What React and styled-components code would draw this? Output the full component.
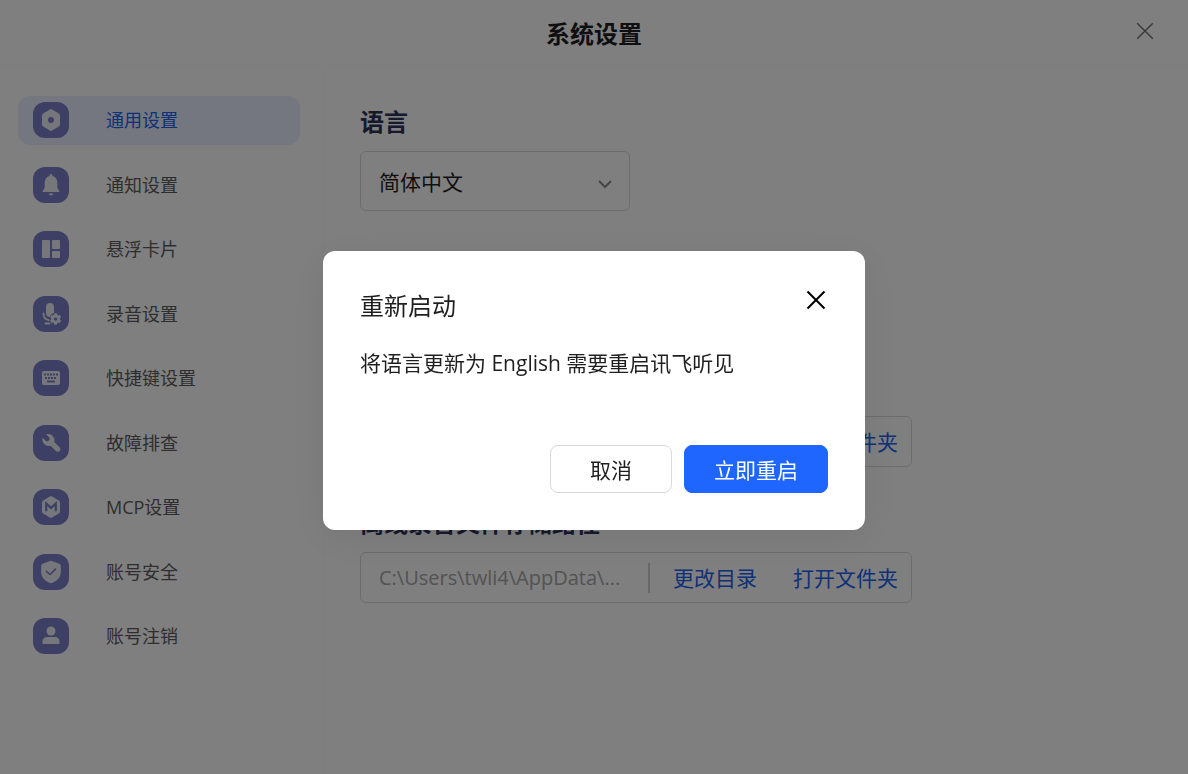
import React, { useState } from 'react'
import styled, { createGlobalStyle } from 'styled-components'

const GearIcon = () => (
    <svg width="36" height="36" viewBox="0 0 36 36" aria-hidden="true">
        <path fillRule="evenodd" fill="#eceef6" d="M16.8 7.6q1.2-.7 2.4 0l6.6 3.8q1.2.7 1.2 2.1v9q0 1.4-1.2 2.1l-6.6 3.8q-1.2.7-2.4 0l-6.6-3.8Q9 23.900 9 22.500v-9q0-1.400 1.200-2.100zM18 15a3 3 0 1 0 0 6a3 3 0 1 0 0-6z" />
    </svg>
)

const BellIcon = () => (
    <svg width="36" height="36" viewBox="0 0 36 36" aria-hidden="true" fill="#eceef6">
        <path d="M18 7c.8 0 1.300.5 1.300 1.300v.6c3 .7 5 3.300 5 6.500v5.200l1.900 3.300c.4.700 0 1.200-.7 1.200H10.500c-.7 0-1.100-.5-.7-1.200l1.900-3.300v-5.200c0-3.200 2-5.800 5-6.500v-.6c0-.8.5-1.300 1.300-1.300z" />
        <path d="M15.700 26.600h4.600c-.3 1.300-1.200 2-2.300 2s-2-.7-2.300-2z" />
    </svg>
)

const CardsIcon = () => (
    <svg width="36" height="36" viewBox="0 0 36 36" aria-hidden="true" fill="#eceef6">
        <rect x="9" y="9" width="8" height="18" rx="1" />
        <rect x="19" y="9" width="8" height="9" rx="1" />
        <rect x="19" y="20" width="8" height="7" rx="1" />
    </svg>
)

const MicIcon = () => (
    <svg width="36" height="36" viewBox="0 0 36 36" aria-hidden="true">
        <rect x="13" y="7" width="8" height="14" rx="4" fill="#eceef6" />
        <path d="M10.500 17.500c0 3.600 2.200 6.200 5.600 6.600M12.500 27.500h4" fill="none" stroke="#eceef6" strokeWidth="1.800" strokeLinecap="round" />
        <circle cx="22.600" cy="23" r="6.200" fill="#7a80c8" />
        <g fill="#eceef6">
            <circle cx="22.600" cy="23" r="4.400" />
            {[0, 60, 120].map((deg) => (
                <rect key={deg} x="21" y="17.300" width="3.200" height="11.400" rx="1" transform={`rotate(${deg} 22.600 23)`} />
            ))}
        </g>
        <circle cx="22.600" cy="23" r="1.700" fill="#7a80c8" />
    </svg>
)

const KeyboardIcon = () => (
    <svg width="36" height="36" viewBox="0 0 36 36" aria-hidden="true">
        <rect x="9" y="11" width="18" height="14" rx="2" fill="#eceef6" />
        <g stroke="#7a80c8" strokeWidth="2" fill="none">
            <path d="M11 14.500h14M12 18h12" strokeDasharray="2 1" />
            <path d="M14 21.500h8" />
        </g>
    </svg>
)

const WrenchIcon = () => (
    <svg width="36" height="36" viewBox="0 0 36 36" aria-hidden="true">
        <path fill="#eceef6" d="M13.200 9.300c3.400-1 7 .9 8 4.200.4 1.200.3 2.400 0 3.500l5.300 5.300c1.200 1.200 1.200 2.800.2 3.800s-2.700 1-3.800-.2l-5.300-5.200c-3.200.9-6.700-.8-7.900-4-.5-1.300-.5-2.700-.1-4l3.400 3.200c.7.600 1.600.6 2.200 0l1.200-1.200c.6-.6.5-1.400-.1-2z" />
    </svg>
)

const McpIcon = () => (
    <svg width="36" height="36" viewBox="0 0 36 36" aria-hidden="true">
        <path fill="#eceef6" d="M16.800 7.600q1.200-.7 2.400 0l6.600 3.800q1.200.7 1.200 2.100v9q0 1.400-1.200 2.100l-6.600 3.800q-1.200.7-2.400 0l-6.600-3.800Q9 23.900 9 22.500v-9q0-1.400 1.200-2.100z" />
        <path d="M13.200 22.300v-7.800l4.800 4.400 4.800-4.400v7.800" fill="none" stroke="#7a80c8" strokeWidth="2.200" />
    </svg>
)

const ShieldIcon = () => (
    <svg width="36" height="36" viewBox="0 0 36 36" aria-hidden="true">
        <path fill="#eceef6" d="M17.200 6.900q.8-.4 1.600 0l7.600 2.900q1.400.6 1.400 2v6.400c0 5-3.600 8.700-9 10.800q-.8.3-1.600 0c-5.400-2.100-9-5.800-9-10.800v-6.400q0-1.400 1.400-2z" />
        <path d="M13.500 17.300l3.500 3.200 5.500-5.400" fill="none" stroke="#7a80c8" strokeWidth="1.600" strokeLinecap="round" strokeLinejoin="round" />
    </svg>
)

const UserIcon = () => (
    <svg width="36" height="36" viewBox="0 0 36 36" aria-hidden="true" fill="#eceef6">
        <circle cx="18" cy="13" r="4.500" />
        <path d="M9.500 26v-2.500c0-3 2-4.500 4.500-4.500h8c2.500 0 4.500 1.500 4.500 4.500V26z" />
    </svg>
)

const CloseIcon = ({ size, weight }) => (
    <svg width={size} height={size} viewBox="0 0 24 24" aria-hidden="true" fill="none" stroke="currentColor" strokeWidth={weight}>
        <path d="M3.500 3.500l17 17M20.500 3.500l-17 17" />
    </svg>
)

const menu = [
    { id: 'general', label: '通用设置', Icon: GearIcon },
    { id: 'notice', label: '通知设置', Icon: BellIcon },
    { id: 'card', label: '悬浮卡片', Icon: CardsIcon },
    { id: 'record', label: '录音设置', Icon: MicIcon },
    { id: 'hotkey', label: '快捷键设置', Icon: KeyboardIcon },
    { id: 'trouble', label: '故障排查', Icon: WrenchIcon },
    { id: 'mcp', label: 'MCP设置', Icon: McpIcon },
    { id: 'safety', label: '账号安全', Icon: ShieldIcon },
    { id: 'logoff', label: '账号注销', Icon: UserIcon },
]

const PathField = ({ label }) => (
    <PathBox>
        <PathInput aria-label={label} readOnly value="C:\Users\twli4\AppData\..." />
        <PathActions>
            <TextButton type="button">更改目录</TextButton>
            <TextButton type="button">打开文件夹</TextButton>
        </PathActions>
    </PathBox>
)

const App = () => {
    const [current, setCurrent] = useState('general')
    const [isOpen, setIsOpen] = useState(true)
    return (
        <>
            <GlobalStyle />
            <Page>
                <Header>
                    <PageTitle>系统设置</PageTitle>
                    <PageClose type="button" aria-label="关闭设置">
                        <CloseIcon size={22} weight={1.5} />
                    </PageClose>
                </Header>
                <Body>
                    <Sidebar>
                        <Menu>
                            {menu.map(({ id, label, Icon }) => (
                                <li key={id}>
                                    <MenuButton type="button" $active={id === current} onClick={() => setCurrent(id)}>
                                        <IconTile><Icon /></IconTile>
                                        {label}
                                    </MenuButton>
                                </li>
                            ))}
                        </Menu>
                    </Sidebar>
                    <Content>
                        <Section>
                            <SectionTitle as="label" htmlFor="language">语言</SectionTitle>
                            <SelectBox>
                                <Select id="language" defaultValue="zh">
                                    <option value="zh">简体中文</option>
                                    <option value="en">English</option>
                                </Select>
                                <Chevron width="14" height="14" viewBox="0 0 14 14" aria-hidden="true">
                                    <path d="M1 4l6 6 6-6" fill="none" stroke="#8c8c8c" strokeWidth="2" />
                                </Chevron>
                            </SelectBox>
                        </Section>
                        <Storage>
                            <PathField label="文件夹" />
                            <Section>
                                <SectionTitle>离线录音文件存储路径</SectionTitle>
                                <PathField label="离线录音文件存储路径" />
                            </Section>
                        </Storage>
                    </Content>
                </Body>
            </Page>
            {isOpen && (
                <Overlay>
                    <Dialog role="dialog" aria-modal="true" aria-labelledby="restart-title">
                        <DialogHead>
                            <DialogTitle id="restart-title">重新启动</DialogTitle>
                            <DialogClose type="button" aria-label="关闭" onClick={() => setIsOpen(false)}>
                                <CloseIcon size={24} weight={2} />
                            </DialogClose>
                        </DialogHead>
                        <DialogText>将语言更新为 English 需要重启讯飞听见</DialogText>
                        <DialogFoot>
                            <Button type="button" onClick={() => setIsOpen(false)}>取消</Button>
                            <Button type="button" $primary>立即重启</Button>
                        </DialogFoot>
                    </Dialog>
                </Overlay>
            )}
        </>
    )
}

export default App


const GlobalStyle = createGlobalStyle`
    *, *::before, *::after {
        box-sizing:border-box;
    }
    body{
        margin:0;
        background:#fff;
        color:#1f1f1f;
        font-family:"Open Sans", "Noto Sans CJK SC", sans-serif;
    }
    button, input, select{
        font-family:inherit;
    }
    button{
        padding:0;
        border:none;
        background:none;
        color:inherit;
        cursor:pointer;
    }
`

const Page = styled.div`
    display:flex;
    flex-direction:column;
    min-height:100vh;
`
const Header = styled.header`
    display:grid;
    grid-template-columns:1fr auto 1fr;
    align-items:center;
    height:66px;
    padding:0 32px;
    border-bottom:1px solid #fafafa;
`
const PageTitle = styled.h1`
    grid-column:2;
    margin:0;
    padding-top:2px;
    font-size:24px;
    line-height:32px;
    font-weight:700;
`
const PageClose = styled.button`
    display:flex;
    justify-self:end;
    padding-bottom:4px;
    color:#6e6e6e;
`
const Body = styled.div`
    display:flex;
    flex:1;
`
const Sidebar = styled.nav`
    width:324px;
    padding:30px 23px 30px 18px;
    border-right:1px solid #fafafa;
`
const Menu = styled.ul`
    display:flex;
    flex-direction:column;
    justify-content:space-between;
    min-height:565px;
    margin:0;
    padding:0;
    list-style:none;
`
const MenuButton = styled.button`
    display:flex;
    align-items:center;
    gap:37px;
    width:100%;
    height:49px;
    padding:0 15px 1px;
    border-radius:12px;
    background:${({ $active }) => ($active ? '#e8effe' : 'transparent')};
    color:${({ $active }) => ($active ? '#2060f0' : '#5c5c5c')};
    font-size:18px;
    line-height:24px;
`
const IconTile = styled.span`
    display:flex;
    border-radius:12px;
    background:#7a80c8;
`
const Content = styled.main`
    flex:1;
    padding:40px 36px;
`
const Section = styled.section`
    display:flex;
    flex-direction:column;
    align-items:flex-start;
    gap:13px;
`
const SectionTitle = styled.h2`
    margin:0;
    color:#2a3358;
    font-size:24px;
    line-height:32px;
    font-weight:700;
`
const SelectBox = styled.div`
    position:relative;
    width:270px;
`
const Select = styled.select`
    width:100%;
    height:60px;
    padding:2px 48px 0 18px;
    border:1px solid #d9d9d9;
    border-radius:6px;
    background:#fff;
    color:#1f1f1f;
    font-size:21px;
    appearance:none;
`
const Chevron = styled.svg`
    position:absolute;
    top:26px;
    right:18px;
    pointer-events:none;
`
const Storage = styled.div`
    display:flex;
    flex-direction:column;
    gap:40px;
    margin-top:205px;
`
const PathBox = styled.div`
    display:flex;
    align-items:center;
    width:100%;
    max-width:552px;
    height:51px;
    padding:0 13px 0 18px;
    border:1px solid #d9d9d9;
    border-radius:6px;
`
const PathInput = styled.input`
    flex:1;
    min-width:0;
    padding:0;
    border:none;
    outline:none;
    background:none;
    color:#a6a6a6;
    font-size:20px;
`
const PathActions = styled.div`
    display:flex;
    gap:36px;
    padding-left:23px;
    border-left:2px solid #d0d0d0;
`
const TextButton = styled.button`
    color:#2060f0;
    font-size:21px;
    line-height:30px;
`
const Overlay = styled.div`
    position:fixed;
    inset:0;
    z-index:10;
    display:flex;
    justify-content:center;
    align-items:center;
    padding-top:7px;
    background:rgba(0,0,0,.5);
`
const Dialog = styled.div`
    width:542px;
    max-width:100%;
    padding:37px;
    border-radius:12px;
    background:#fff;
    box-shadow:0 8px 40px rgba(0,0,0,.08);
`
const DialogHead = styled.div`
    display:flex;
    justify-content:space-between;
    align-items:flex-start;
`
const DialogTitle = styled.h2`
    margin:0;
    font-size:24px;
    line-height:36px;
    font-weight:400;
`
const DialogClose = styled.button`
    display:flex;
    color:#000;
`
const DialogText = styled.p`
    margin:24px 0 67px;
    font-size:21px;
    line-height:30px;
`
const DialogFoot = styled.div`
    display:flex;
    justify-content:flex-end;
    gap:12px;
`
const Button = styled.button`
    height:48px;
    min-width:${({ $primary }) => ($primary ? '144px' : '122px')};
    padding-top:2px;
    border:1px solid ${({ $primary }) => ($primary ? '#1e66ff' : '#d9d9d9')};
    border-radius:8px;
    background:${({ $primary }) => ($primary ? '#1e66ff' : '#fff')};
    color:${({ $primary }) => ($primary ? '#fff' : '#1f1f1f')};
    font-size:21px;
    line-height:30px;
`
